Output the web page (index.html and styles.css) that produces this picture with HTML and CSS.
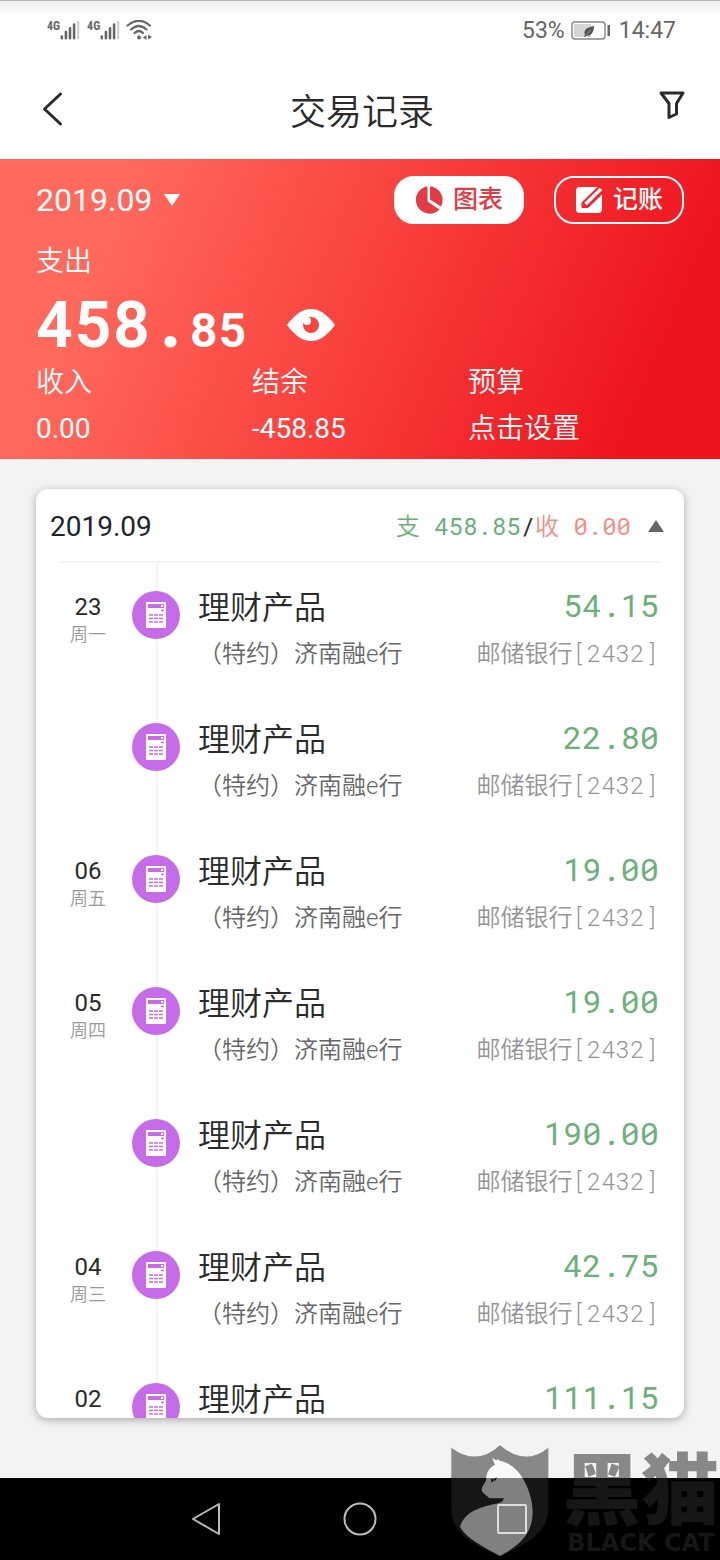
FILE: index.html
```html
<!DOCTYPE html>
<html lang="zh-CN">
<head>
<meta charset="utf-8">
<meta name="viewport" content="width=device-width, initial-scale=1">
<title>交易记录</title>
<link rel="stylesheet" href="styles.css">
</head>
<body>
<svg class="defs" aria-hidden="true">
  <symbol id="calc" viewBox="0 0 48 48">
    <rect x="14" y="11" width="20" height="26" rx="1" fill="#fff"/>
    <path d="M16 13h16v4H16z" fill="#c66ce8"/>
    <path d="M29 14h2v2h-2z" fill="#fff"/>
    <path d="M29 19.500h3M17 24h4M22 24h4M27 24h4M17 27.500h4M22 27.500h4M27 27.500h4M17 31h4M22 31h4M27 31h4" stroke="#c66ce8" stroke-width="1.700"/>
  </symbol>
  <symbol id="signal" viewBox="0 0 22 22">
    <path d="M2 17v2M6.500 12v7M11 8v11M15.500 4v15" stroke="#666" stroke-width="2.800" stroke-linecap="round"/>
    <path d="M20 0v20" stroke="#d2d2d2" stroke-width="2.600"/>
  </symbol>
</svg>
<div class="app">
  <div class="status">
    <div class="status-side">
      <span class="net">4G</span><svg class="signal"><use href="#signal"/></svg>
      <span class="net net-second">4G</span><svg class="signal"><use href="#signal"/></svg>
      <svg class="wifi" viewBox="0 0 26 22" fill="none" stroke="#666" stroke-width="2.200" stroke-linecap="round"><path d="M1.500 5.500Q13-4 24 5.500M5 9.500Q13 2.500 20.500 9.500M8.500 13Q13 9 17 13"/><circle cx="13" cy="17.500" r="2" fill="#666" stroke="none"/><path d="M20.500 15v5l-3.500-2.500zM22 14.500v5l4-2.500z" fill="#666" stroke="none"/></svg>
    </div>
    <div class="status-side">
      <span>53%</span>
      <svg class="battery" viewBox="0 0 40 20"><rect x="1" y="1" width="33" height="17" rx="3" fill="#fff" stroke="#858585" stroke-width="1.400"/><path d="M3 3h17v13H3z" fill="#d6d6d6"/><path d="M36.500 4h2.500v11h-2.500z" fill="#666"/><path d="M23 5c-7 1-11 4-9 9l-1 1.500 1 .5 1-1c6 0 8-5 8-10z" fill="#555"/><path d="M15 14l5-5" stroke="#aaa" stroke-width=".7"/></svg>
      <span>14:47</span>
    </div>
  </div>
  <header class="bar">
    <button class="icon-btn" aria-label="返回"><svg width="32" height="40" viewBox="0 0 32 40" fill="none" stroke="#2b2b2b" stroke-width="3" stroke-linecap="round" stroke-linejoin="round"><path d="M24.500 4L8.500 19l16 15"/></svg></button>
    <h1>交易记录</h1>
    <button class="icon-btn" aria-label="筛选"><svg width="32" height="48" viewBox="0 0 32 48" fill="none" stroke="#2b2b2b" stroke-width="3" stroke-linejoin="round"><path d="M5 7h22l-6.500 10.500v10.500L13 31.500V17.500z"/></svg></button>
  </header>
  <section class="summary">
    <div class="summary-top">
      <button class="month">2019.09 <svg width="16" height="12" viewBox="0 0 16 12"><path d="M0 0h16L8 12z" fill="#fff"/></svg></button>
      <div class="actions">
        <button class="pill pill-solid"><svg width="28" height="28" viewBox="0 0 28 28"><path d="M12.500 .2V15.500L24.500 23.500A13.800 13.800 0 1 1 12.500 .2z" fill="#e23b43"/><path d="M15 .2A13.800 13.800 0 0 1 26 20.500L15 13.500z" fill="#e23b43"/></svg>图表</button>
        <button class="pill"><svg width="28" height="28" viewBox="0 0 28 28"><path d="M5 1h17.500L6.500 16.500V22h6.500L27 8.500V23a4 4 0 0 1-4 4H5a4 4 0 0 1-4-4V5a4 4 0 0 1 4-4z" fill="#fff"/><path d="M26 3L10.500 18" fill="none" stroke="#fff" stroke-width="3.400"/></svg>记账</button>
      </div>
    </div>
    <p class="label">支出</p>
    <div class="total">
      <span class="mono whole">458.<span class="cents">85</span></span>
      <button class="icon-btn" aria-label="隐藏金额"><svg width="48" height="34" viewBox="0 0 48 34"><path d="M0 17C9 5 16 1 24 1s15 4 24 16C39 29 32 33 24 33S9 29 0 17z" fill="#fff"/><circle cx="24" cy="17" r="8" fill="#f9463f"/><circle cx="20" cy="13" r="4" fill="#fff"/></svg></button>
    </div>
    <dl class="stats">
      <div><dt>收入</dt><dd>0.00</dd></div>
      <div><dt>结余</dt><dd>-458.85</dd></div>
      <div><dt>预算</dt><dd class="hint">点击设置</dd></div>
    </dl>
  </section>
  <main class="content">
    <section class="card">
      <div class="card-head">
        <h2>2019.09</h2>
        <div class="mono sums"><span class="out"><span class="kind">支</span> 458.85</span>/<span class="in"><span class="kind">收</span> 0.00</span></div>
        <button class="icon-btn" aria-label="收起"><svg width="16" height="12" viewBox="0 0 16 12"><path d="M0 12h16L8 0z" fill="#666"/></svg></button>
      </div>
      <ul class="list">
        <li class="row"><div class="date">23<small>周一</small></div><svg class="badge"><use href="#calc"/></svg><div class="info"><b>理财产品</b><span class="mono amount">54.15</span><span class="note">（特约）济南融e行</span><span class="mono bank">邮储银行[2432]</span></div></li>
        <li class="row"><div class="date"></div><svg class="badge"><use href="#calc"/></svg><div class="info"><b>理财产品</b><span class="mono amount">22.80</span><span class="note">（特约）济南融e行</span><span class="mono bank">邮储银行[2432]</span></div></li>
        <li class="row"><div class="date">06<small>周五</small></div><svg class="badge"><use href="#calc"/></svg><div class="info"><b>理财产品</b><span class="mono amount">19.00</span><span class="note">（特约）济南融e行</span><span class="mono bank">邮储银行[2432]</span></div></li>
        <li class="row"><div class="date">05<small>周四</small></div><svg class="badge"><use href="#calc"/></svg><div class="info"><b>理财产品</b><span class="mono amount">19.00</span><span class="note">（特约）济南融e行</span><span class="mono bank">邮储银行[2432]</span></div></li>
        <li class="row"><div class="date"></div><svg class="badge"><use href="#calc"/></svg><div class="info"><b>理财产品</b><span class="mono amount">190.00</span><span class="note">（特约）济南融e行</span><span class="mono bank">邮储银行[2432]</span></div></li>
        <li class="row"><div class="date">04<small>周三</small></div><svg class="badge"><use href="#calc"/></svg><div class="info"><b>理财产品</b><span class="mono amount">42.75</span><span class="note">（特约）济南融e行</span><span class="mono bank">邮储银行[2432]</span></div></li>
        <li class="row"><div class="date">02</div><svg class="badge"><use href="#calc"/></svg><div class="info"><b>理财产品</b><span class="mono amount">111.15</span></div></li>
      </ul>
    </section>
  </main>
  <nav class="nav">
    <button aria-label="后退"><svg width="36" height="36" viewBox="0 0 36 36"><path d="M3 18L29 3v30z"/></svg></button>
    <button aria-label="主页"><svg width="36" height="36" viewBox="0 0 36 36"><circle cx="18" cy="18" r="15.500"/></svg></button>
    <button aria-label="最近任务"><svg width="36" height="36" viewBox="0 0 36 36"><rect x="4" y="4" width="28" height="28" rx="1"/></svg></button>
  </nav>
  <div class="watermark">
    <svg width="98" height="112" viewBox="63 45 294 336">
      <path fill-rule="evenodd" fill="#2c2828" fill-opacity=".53" d="M64 53Q140 110 210 46Q285 110 355 53V235C355 320 265 350 210 380C150 350 64 320 64 235Z M187 84L195 105C178 112 170 128 169 145C168 160 154 168 155 180C158 192 171 196 178 205H222Q218 217 205 220C165 228 105 240 90 290C108 325 160 350 210 378C270 345 308 310 308 245C308 180 265 100 210 93L202 87L200 92Z"/>
      <path fill="#fff" fill-opacity=".5" d="M187 84L195 105C178 112 170 128 169 145C168 160 154 168 155 180C158 192 171 196 178 205H222Q218 217 205 220C165 228 105 240 90 290C108 325 160 350 210 378C270 345 308 310 308 245C308 180 265 100 210 93L202 87L200 92Z"/>
      <path fill="#111" d="M182 148l5-3 2 9-4 4zM190 148l11-6-4 9-7 3z"/>
    </svg>
    <div class="brand"><span class="brand-cn">黑猫</span><span class="brand-en">BLACK CAT</span></div>
  </div>
</div>
</body>
</html>
```
FILE: styles.css
```css
* { box-sizing: border-box; margin: 0; padding: 0; }
body { font-family: Roboto, "Noto Sans CJK SC", sans-serif; color: #2b2b2b; background: #f3f3f3; }
button { border: 0; background: none; font: inherit; color: inherit; cursor: pointer; }
svg { display: block; flex: none; }
ul { list-style: none; }
.defs { position: absolute; width: 0; height: 0; }
.mono { font-family: "Roboto Mono", "Liberation Mono", "Noto Sans CJK SC", monospace; }
.app { display: flex; flex-direction: column; height: 100vh; overflow: hidden; }

.status { display: flex; justify-content: space-between; align-items: center; height: 60px; padding: 0 44px 0 47px; border-top: 1px solid #b5b5b5; background: linear-gradient(#eee, #fff 16px); font-size: 23px; color: #666; }
.status-side { display: flex; align-items: center; }
.net { align-self: flex-start; font: 700 12px/12px "Roboto Condensed", "Liberation Sans Narrow", "DejaVu Sans Condensed", sans-serif; }
.net-second { margin-left: 7px; }
.signal { width: 20px; height: 22px; }
.wifi { width: 26px; height: 22px; margin-left: 6px; }
.battery { width: 40px; height: 20px; margin: 0 8px 0 6px; }

.bar { display: flex; justify-content: space-between; align-items: center; height: 99px; padding: 0 32px 0 36px; background: #fff; }
.bar h1 { padding-top: 6px; font-size: 36px; font-weight: 350; line-height: 48px; }

.summary { height: 300px; padding: 16px 36px 0; color: #fff; background: linear-gradient(113deg, #ff6a5d 15%, #f9423d 49%, #ee151f 87%); }
.summary-top { display: flex; justify-content: space-between; align-items: center; }
.month { display: flex; align-items: center; gap: 12px; padding-top: 1px; font-size: 32px; line-height: 48px; }
.actions { display: flex; gap: 30px; }
.pill { display: flex; align-items: center; justify-content: center; gap: 10px; width: 130px; height: 48px; border: 2px solid #fff; border-radius: 20px; font-size: 25px; font-weight: 500; line-height: 24px; }
.pill-solid { background: #fff; color: #e23b43; }
.label { margin-top: 20px; font-size: 28px; font-weight: 350; line-height: 36px; }
.total { display: flex; align-items: center; gap: 40px; height: 80px; padding-top: 10px; }
.whole { font-size: 64px; font-weight: 700; line-height: 72px; }
.cents { font-size: 48px; }
.stats { display: grid; grid-template-columns: repeat(3, 1fr); font-size: 28px; line-height: 46px; }
.stats dt, .stats .hint { font-weight: 350; }

.content { flex: 1; display: flex; min-height: 0; padding: 30px 36px 60px; }
.card { flex: 1; overflow: hidden; border-radius: 12px; background: #fff; box-shadow: 0 2px 8px rgba(0, 0, 0, .3); }
.card-head { display: flex; align-items: center; height: 72px; padding: 2px 20px 0 14px; }
.card-head h2 { flex: 1; font-size: 28px; font-weight: 400; color: #20242c; }
.sums { font-size: 24px; line-height: 32px; margin-right: 17px; white-space: nowrap; }
.kind { font-weight: 350; }
.out { color: #6cb07a; }
.in { color: #f58d86; }
.list { margin: 0 24px; border-top: 2px solid #f3f3f3; }
.row { display: grid; grid-template-columns: 56px 48px 1fr; column-gap: 16px; height: 132px; padding-top: 24px; background: linear-gradient(#f3f3f3, #f3f3f3) 96px 0 / 2px 100% no-repeat; }
.date { padding-top: 4px; text-align: center; font-size: 24px; line-height: 32px; }
.date small { display: block; font-size: 18px; font-weight: 350; line-height: 24px; color: #999; }
.badge { width: 48px; height: 48px; margin-top: 4px; border-radius: 50%; background: #c66ce8; }
.info { display: grid; grid-template-columns: 1fr auto; grid-template-rows: 40px 32px; row-gap: 10px; padding: 0 1px 0 2px; white-space: nowrap; }
.info b { font-size: 32px; font-weight: 350; line-height: 42px; }
.amount { text-align: right; font-size: 32px; line-height: 36px; color: #6cb07a; }
.note { font-size: 24px; font-weight: 350; line-height: 34px; color: #666; }
.bank { text-align: right; font-size: 24px; font-weight: 350; line-height: 32px; color: #959595; }

.nav { display: flex; justify-content: center; align-items: center; gap: 116px; height: 82px; background: #000; }
.nav svg { fill: none; stroke: #bbb; stroke-width: 2; stroke-linejoin: round; }

.watermark { position: fixed; right: 1px; bottom: 3px; display: flex; gap: 14px; pointer-events: none; color: rgba(44, 40, 40, .53); }
.brand { display: flex; flex-direction: column; align-items: center; white-space: nowrap; }
.brand-cn { font: 900 78px/80px "Noto Sans CJK SC", sans-serif; }
.brand-en { padding-top: 4px; font: 700 24px/28px "DejaVu Sans", sans-serif; }
```
